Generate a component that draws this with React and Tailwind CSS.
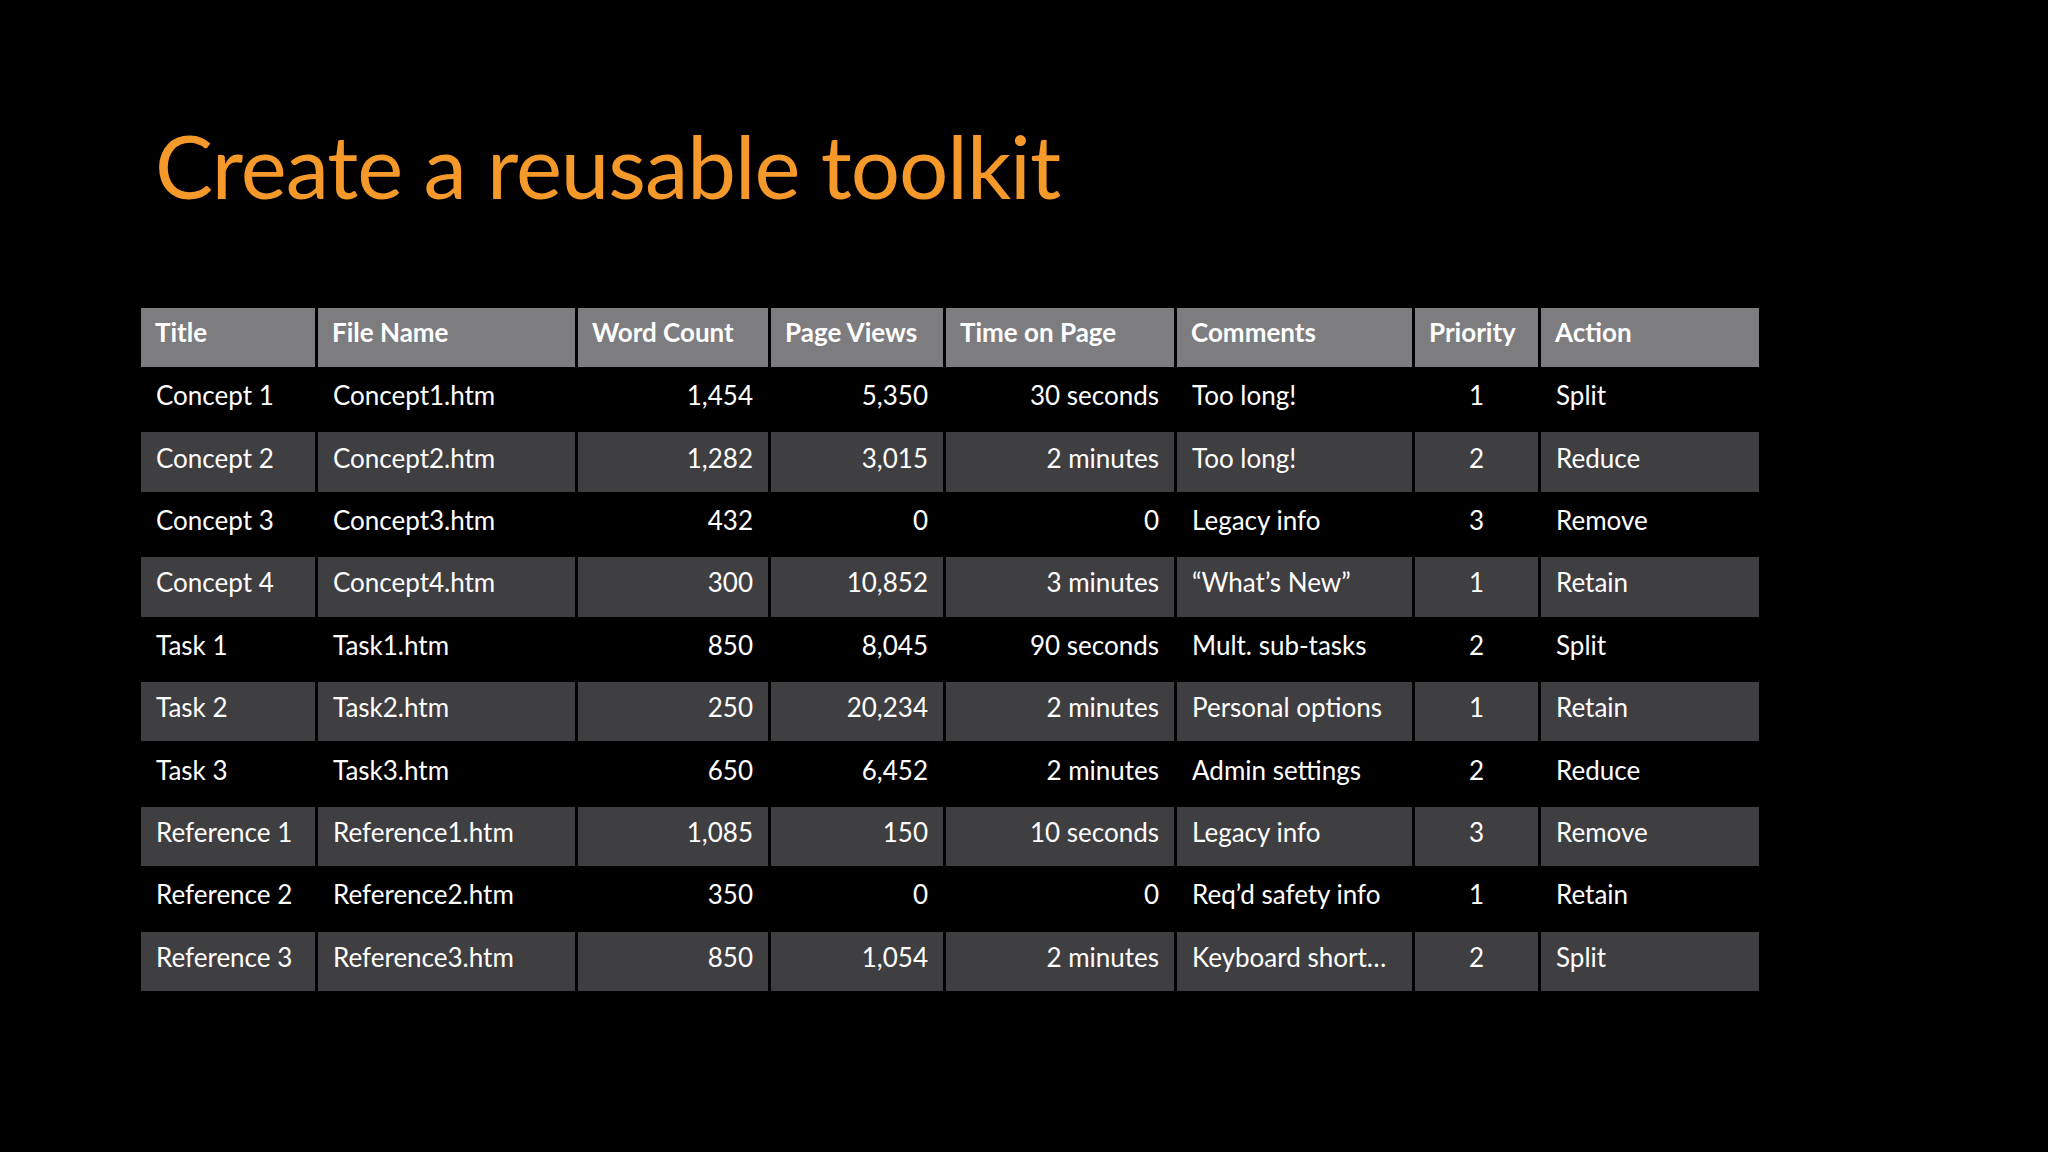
import React from 'react'

const cols = [
  { name: 'Title', w: 'w-[174px]', align: 'text-left' },
  { name: 'File Name', w: 'w-[257px]', align: 'text-left' },
  { name: 'Word Count', w: 'w-[190px]', align: 'text-right' },
  { name: 'Page Views', w: 'w-[172px]', align: 'text-right' },
  { name: 'Time on Page', w: 'w-[228px]', align: 'text-right' },
  { name: 'Comments', w: 'w-[235px]', align: 'text-left' },
  { name: 'Priority', w: 'w-[123px]', align: 'text-center' },
  { name: 'Action', w: 'w-[218px]', align: 'text-left' },
]

const rows = [
  ['Concept 1', 'Concept1.htm', '1,454', '5,350', '30 seconds', 'Too long!', '1', 'Split'],
  ['Concept 2', 'Concept2.htm', '1,282', '3,015', '2 minutes', 'Too long!', '2', 'Reduce'],
  ['Concept 3', 'Concept3.htm', '432', '0', '0', 'Legacy info', '3', 'Remove'],
  ['Concept 4', 'Concept4.htm', '300', '10,852', '3 minutes', '\u201cWhat\u2019s New\u201d', '1', 'Retain'],
  ['Task 1', 'Task1.htm', '850', '8,045', '90 seconds', 'Mult. sub-tasks', '2', 'Split'],
  ['Task 2', 'Task2.htm', '250', '20,234', '2 minutes', 'Personal options', '1', 'Retain'],
  ['Task 3', 'Task3.htm', '650', '6,452', '2 minutes', 'Admin settings', '2', 'Reduce'],
  ['Reference 1', 'Reference1.htm', '1,085', '150', '10 seconds', 'Legacy info', '3', 'Remove'],
  ['Reference 2', 'Reference2.htm', '350', '0', '0', 'Req\u2019d safety info', '1', 'Retain'],
  ['Reference 3', 'Reference3.htm', '850', '1,054', '2 minutes', 'Keyboard short\u2026', '2', 'Split'],
]

export default function App() {
  return (
    <div className="w-[2048px] h-[1152px] bg-black overflow-hidden font-['Lato',sans-serif]">
      <h1 className="pl-[155px] pt-[122px] text-[87px] leading-none text-[#f6992b] tracking-[-1px]">
        Create a reusable toolkit
      </h1>

      <table className="ml-[138px] mt-[96px] border-separate border-spacing-[3px] text-[26px] text-white">
        <thead>
          <tr>
            {cols.map((c) => (
              <th key={c.name} className={`${c.w} h-[59px] px-[14px] pb-[11px] bg-[#7d7c7f] font-bold text-left`}>
                {c.name}
              </th>
            ))}
          </tr>
        </thead>
        <tbody>
          {rows.map((r, i) => (
            <tr key={i}>
              {r.map((v, j) => (
                <td
                  key={j}
                  className={`h-[59.4px] px-[15px] pb-[8px] ${cols[j].align} ${i % 2 === 1 ? 'bg-[#3f3e41]' : 'bg-black'}`}
                >
                  {v}
                </td>
              ))}
            </tr>
          ))}
        </tbody>
      </table>
    </div>
  )
}
